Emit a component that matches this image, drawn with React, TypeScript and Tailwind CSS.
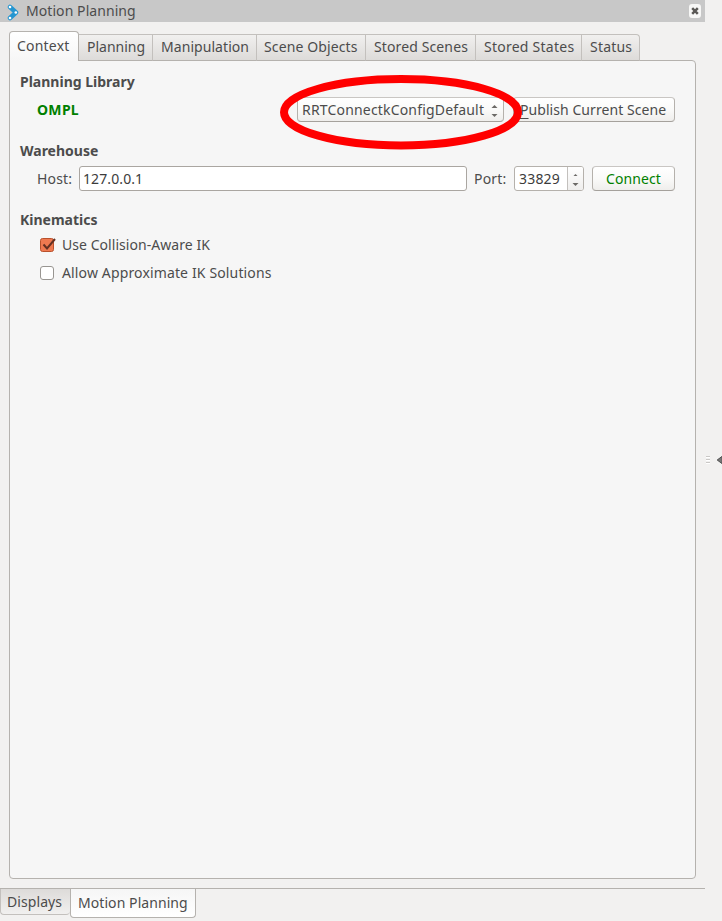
import React from "react";

const tabs = [
  { label: "Planning", box: "w-[74px]", text: "tracking-[0px]" },
  { label: "Manipulation", box: "w-[104px]", text: "tracking-[0.06px]" },
  { label: "Scene Objects", box: "w-[109px]", text: "tracking-[0.12px] indent-[-1px]" },
  { label: "Stored Scenes", box: "w-[110px]", text: "tracking-[0.12px]" },
  { label: "Stored States", box: "w-[106px]", text: "tracking-[0.25px]" },
  { label: "Status", box: "w-[58px]", text: "tracking-[0.2px]" },
];

function Arrows({ dim = false }: { dim?: boolean }) {
  return (
    <svg width="7" height="15" viewBox="0 0 7 15" className="mt-px shrink-0">
      <path d={dim ? "M1.500 4 3.500 2l2 2z" : "M.5 5 3.500 2l3 3z"} fill="#6b6966" />
      <path d="M.5 11h6L3.500 14z" fill="#6b6966" />
    </svg>
  );
}

function Heading({ children, className }: { children: React.ReactNode; className: string }) {
  return <h2 className={`h-[20px] pl-[10px] font-bold leading-[20px] ${className}`}>{children}</h2>;
}

const raised =
  "border border-[#b5b1ac] border-t-[#c9c6c3] border-b-[#a5a19c] rounded-[4px] bg-linear-to-b from-white via-[#fafaf9] to-[#efeeec]";

export default function App() {
  return (
    <div className="relative flex h-[921px] w-[722px] overflow-hidden whitespace-nowrap bg-[#f2f1f0] font-['Noto_Sans',sans-serif] text-[14px] text-[#4c4c4c]">
      <div className="flex w-[705px] flex-col">
        <header className="flex h-[22px] shrink-0 items-center bg-[#c8c8c8] pl-[7px] pr-[4px]">
          <svg width="13" height="17" viewBox="0 0 13 17" className="mt-[2px]">
            <path d="M3 3 9 8.5 3 14" fill="none" stroke="#2596d1" strokeWidth="4.5" strokeLinejoin="round" strokeLinecap="round" />
            <circle cx="3" cy="3" r="1.3" fill="#fff" />
            <circle cx="8.8" cy="8.5" r="1.3" fill="#fff" />
            <circle cx="3" cy="14" r="1.3" fill="#fff" />
          </svg>
          <span className="-mt-[2px] ml-[6px] tracking-[0.07px]">Motion Planning</span>
          <button className="ml-auto flex h-[14px] w-[12px] items-center justify-center rounded-[3px] bg-[#f7f7f6]">
            <svg width="8" height="8" viewBox="0 0 8 8">
              <path d="m1.200 1.200 5.600 5.600M6.800 1.200 1.200 6.800" stroke="#5a5855" strokeWidth="2.500" />
            </svg>
          </button>
        </header>

        <nav className="z-10 mt-[9px] flex h-[30px] shrink-0 items-end pl-[9px]">
          <div className="h-[30px] w-[70px] rounded-t-[4px] border border-b-0 border-[#b5b2ae] bg-linear-to-b from-white to-[#f6f6f6] pl-[7px] leading-[28px] tracking-[0.2px]">
            Context
          </div>
          {tabs.map((t, i) => (
            <div
              key={t.label}
              className={`h-[27px] border border-l-0 border-[#c3c0bd] border-b-[#b5b2ae] bg-linear-to-b from-[#f1f0ef] to-[#dddbd9] pl-[8px] leading-[23px] ${t.box} ${t.text} ${i === 5 ? "rounded-tr-[4px]" : ""}`}
            >
              {t.label}
            </div>
          ))}
        </nav>

        <main className="-mt-px ml-[9px] flex h-[819px] w-[687px] shrink-0 flex-col rounded-[4px] rounded-tl-none border border-[#b5b2ae] bg-[#f6f6f6]">
          <Heading className="mt-[11px]">Planning Library</Heading>
          <div className="mt-[5px] flex h-[25px] items-center pl-[27px]">
            <span className="w-[260px] font-bold tracking-[0.3px] text-[#008000]">OMPL</span>
            <div className={`flex h-[25px] w-[207px] items-center pl-[4px] ${raised}`}>
              <span className="w-[189px] tracking-[0.18px]">RRTConnectkConfigDefault</span>
              <Arrows />
            </div>
            <button className={`ml-[9px] h-[25px] w-[162px] pl-[6px] text-left leading-[23px] tracking-[0.06px] ${raised}`}>
              <span className="underline underline-offset-3">P</span>ublish Current Scene
            </button>
          </div>

          <Heading className="mt-[19px]">Warehouse</Heading>
          <div className="mt-[5px] flex h-[25px] items-center pl-[27px]">
            <span className="w-[42px] tracking-[0.15px]">Host:</span>
            <div className="h-[25px] w-[388px] rounded-[3px] border border-[#aaa6a1] bg-white pl-[3px] leading-[24px] tracking-[0.1px] text-[#3c3c3c]">127.0.0.1</div>
            <span className="ml-[7px] w-[40px] tracking-[0.2px]">Port:</span>
            <div className="flex h-[25px] w-[70px] overflow-hidden rounded-[3px] border border-[#b5b1ac] bg-white leading-[24px] text-[#3c3c3c]">
              <span className="w-[53px] border-r border-[#c3c0bd] pl-[4px] tracking-[0.2px]">33829</span>
              <span className="flex flex-1 items-center justify-center bg-linear-to-b from-white to-[#efeeed]"><Arrows dim /></span>
            </div>
            <button className={`ml-[8px] h-[25px] w-[83px] pl-[13px] text-left leading-[23px] tracking-[0.08px] text-[#008000] ${raised}`}>Connect</button>
          </div>

          <Heading className="mt-[19px]">Kinematics</Heading>
          <label className="mt-[5px] flex h-[20px] items-center pl-[30px]">
            <svg width="16" height="16" viewBox="0 0 16 16">
              <rect x=".5" y="1.500" width="13" height="13" rx="2" fill="#ef7950" stroke="#b9512c" />
              <path d="m3.500 7.500 3.500 4 8-9.500" fill="none" stroke="#643022" strokeWidth="2" />
            </svg>
            <span className="-mt-[2px] ml-[6px] tracking-[0.05px]">Use Collision-Aware IK</span>
          </label>
          <label className="mt-[8px] flex h-[20px] items-center pl-[30px]">
            <span className="h-[14px] w-[14px] rounded-[3px] border border-[#989591] bg-white" />
            <span className="-mt-[2px] ml-[8px] tracking-[0.14px]">Allow Approximate IK Solutions</span>
          </label>
        </main>

        <footer className="mt-[9px] flex h-[33px] items-start border-t border-[#b5b2ae]">
          <div className="h-[26px] w-[70px] rounded-b-[4px] border border-r-0 border-t-0 border-[#c3c0bd] bg-linear-to-b from-[#dddbd9] to-[#f1f0ef] pl-[6px] leading-[26px] tracking-[0.08px]">Displays</div>
          <div className="h-[29px] w-[126px] rounded-b-[4px] border border-t-0 border-[#b5b2ae] bg-linear-to-b from-[#f6f6f6] to-white pl-[7px] leading-[28px] tracking-[0.07px]">Motion Planning</div>
        </footer>
      </div>

      <aside className="-mt-px flex h-full w-[17px] items-center justify-between">
        <svg width="17" height="10" viewBox="0 0 17 10">
          <path d="M1 1.500h4M1 4.500h4M1 7.500h4" stroke="#cac8c6" />
          <path d="M1 2.500h4M1 5.500h4M1 8.500h4" stroke="#fff" />
          <path d="m12.200 5 5-3.700v7.400z" fill="#777" stroke="#4e4e4e" />
        </svg>
      </aside>

      <svg width="244" height="76" viewBox="0 0 244 76" className="pointer-events-none absolute left-[279px] top-[74px]">
        <ellipse cx="122" cy="38.200" rx="117" ry="33.200" fill="none" stroke="#ff0000" strokeWidth="8" />
      </svg>
    </div>
  );
}
